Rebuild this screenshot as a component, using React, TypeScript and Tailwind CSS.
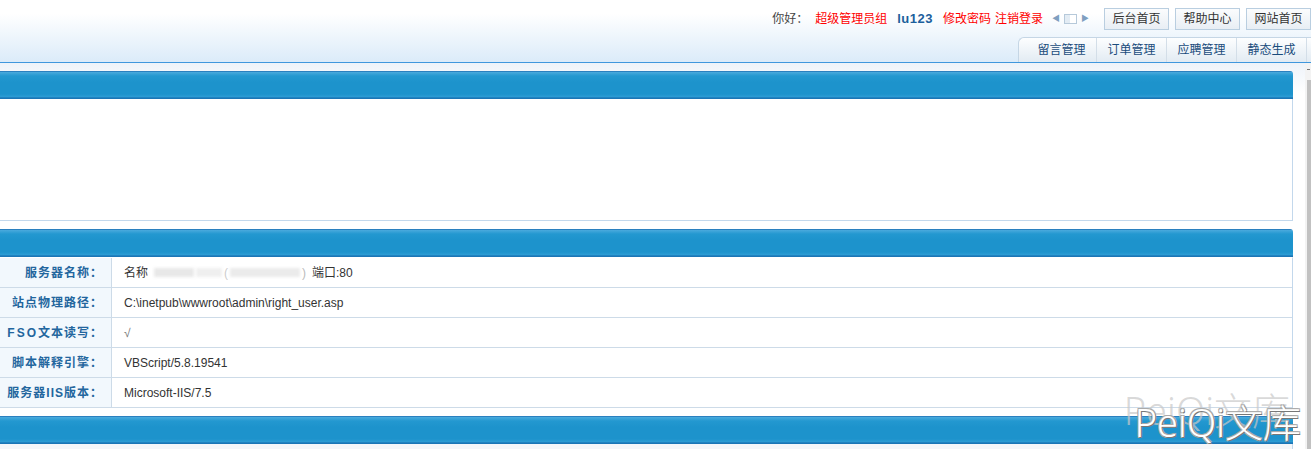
import type { ReactNode } from 'react';

// 后台右侧框架：顶部导航 + 服务器信息面板

const BAR =
  'h-[28px] rounded-tr-[3px] bg-[linear-gradient(#2a80bf_0,#2a80bf_1px,#4aaadd_1px,#2398d0_5px,#1d93cc_40%,#1d93cc_82%,#2c9cd4_92%,#1b76b6_96%,#1b76b6_100%)]';

const tabs = ['留言管理', '订单管理', '应聘管理', '静态生成'];

function Redacted() {
  return (
    <span className="mx-[6px] inline-flex items-center gap-[2px] align-middle">
      <span className="inline-block h-[9px] w-[40px] bg-[#e8e8e8] blur-[1.5px]" />
      <span className="inline-block h-[9px] w-[26px] bg-[#efefef] blur-[1.5px]" />
      <span className="text-[#ccc]">(</span>
      <span className="inline-block h-[9px] w-[70px] bg-[#ebebeb] blur-[1.5px]" />
      <span className="text-[#bbb]">)</span>
    </span>
  );
}

const rows: { label: ReactNode; value: ReactNode }[] = [
  {
    label: '服务器名称：',
    value: (
      <>
        名称
        <Redacted />
        端口:80
      </>
    ),
  },
  { label: '站点物理路径：', value: 'C:\\inetpub\\wwwroot\\admin\\right_user.asp' },
  {
    label: (
      <>
        <span className="tracking-[2px]">FSO</span>文本读写：
      </>
    ),
    value: <span className="text-[#777]">√</span>,
  },
  { label: '脚本解释引擎：', value: 'VBScript/5.8.19541' },
  { label: '服务器IIS版本：', value: 'Microsoft-IIS/7.5' },
];

function HeadButton({ children }: { children: ReactNode }) {
  return (
    <button className="flex h-[22px] w-[65px] shrink-0 items-center justify-center border border-[#b9cee0] bg-[linear-gradient(#fbfcfd,#e8eef4)] text-[12px] text-[#333]">
      {children}
    </button>
  );
}

export default function App() {
  return (
    <div className="relative h-[449px] w-[1311px] overflow-hidden bg-white font-[family-name:'Liberation_Sans','Noto_Sans_CJK_SC',sans-serif] text-[12px] text-[#333]">
      {/* header */}
      <div className="flex h-[63px] flex-col border-b border-[#3f97dd] bg-[linear-gradient(#fff_22%,#dbebf9)]">
        <div className="flex h-[37px] items-center justify-end">
          <span className="text-[#444]">你好：</span>
          <span className="ml-[7px] text-[#f00]">超级管理员组</span>
          <span className="ml-[10px] text-[13px] font-bold tracking-[0.5px] text-[#1c5f9c]">lu123</span>
          <span className="ml-[10px] text-[#f00]">修改密码</span>
          <span className="ml-[4px] text-[#f00]">注销登录</span>
          <div className="ml-[9px] flex items-center gap-[4px] text-[8px] text-[#7f9fc0]">
            <span>◀</span>
            <span className="flex h-[10px] w-[13px] border border-[#b6c9da] bg-white">
              <span className="w-[5px] bg-[#e3ecf4]" />
            </span>
            <span>▶</span>
          </div>
          <div className="ml-[15px] flex gap-[6px]">
            <HeadButton>后台首页</HeadButton>
            <HeadButton>帮助中心</HeadButton>
            <HeadButton>网站首页</HeadButton>
          </div>
        </div>
        <div className="flex h-[25px] justify-end">
          <div className="flex rounded-tl-[6px] border-l border-t border-[#c5d6e5] bg-[linear-gradient(#fdfeff,#e2ebf3)]">
            {tabs.map((t, i) => (
              <div
                key={t}
                className={`flex items-center justify-center border-r border-[#d3dee8] text-[12px] text-[#1a4c7c] ${
                  i === 0 ? 'w-[78px] pl-[8px]' : 'w-[70px]'
                }`}
              >
                {t}
              </div>
            ))}
            <div className="w-[4px]" />
          </div>
        </div>
      </div>

      {/* body */}
      <div className="flex h-[386px]">
        <div className="flex-1 bg-[linear-gradient(#eef3f9,#fff_30px)] pr-[12px] pt-[8px]">
          <div className={BAR} />
          <div className="h-[122px] border-b border-r border-[#c3d8ec] bg-white" />

          <div className={`mt-[8px] ${BAR}`} />
          <div className="border-r border-t border-[#c3d8ec] border-t-white">
            {rows.map((r, i) => (
              <div key={i} className="flex h-[30px] border-b border-[#cddbe8]">
                <div className="flex w-[112px] shrink-0 items-center justify-end border-r border-[#cddbe8] bg-[#f2f8fd] pr-[8px] font-bold tracking-[1px] text-[#23669e]">
                  {r.label}
                </div>
                <div className="flex items-center pl-[12px] text-[#333]">{r.value}</div>
              </div>
            ))}
          </div>

          <div className={`mt-[8px] ${BAR}`} />
          <div className="h-[10px] border-r border-[#c3d8ec] bg-[#f4f7fa]" />
        </div>

        {/* scrollbar */}
        <div className="flex w-[6px] flex-col bg-[#f3f3f3]">
          <div className="ml-[2px] mt-[6px] h-px w-[3px] bg-[#777]" />
          <div className="ml-[2px] mt-[10px] flex-1 bg-[#c1c1c1]" />
        </div>
      </div>

      {/* watermark */}
      <div className="pointer-events-none absolute bottom-[8px] right-[10px] font-[family-name:'Noto_Sans','Noto_Sans_CJK_SC',sans-serif] text-[38px] font-light leading-none">
        <span className="absolute -left-[11px] -top-[12px] whitespace-nowrap text-[#c8c8c8]/70">PeiQi文库</span>
        <span className="relative whitespace-nowrap text-white [text-shadow:1px_1px_0_#777,-1px_-1px_0_#aaa,1px_-1px_0_#aaa,-1px_1px_0_#aaa]">
          PeiQi文库
        </span>
      </div>
    </div>
  );
}
